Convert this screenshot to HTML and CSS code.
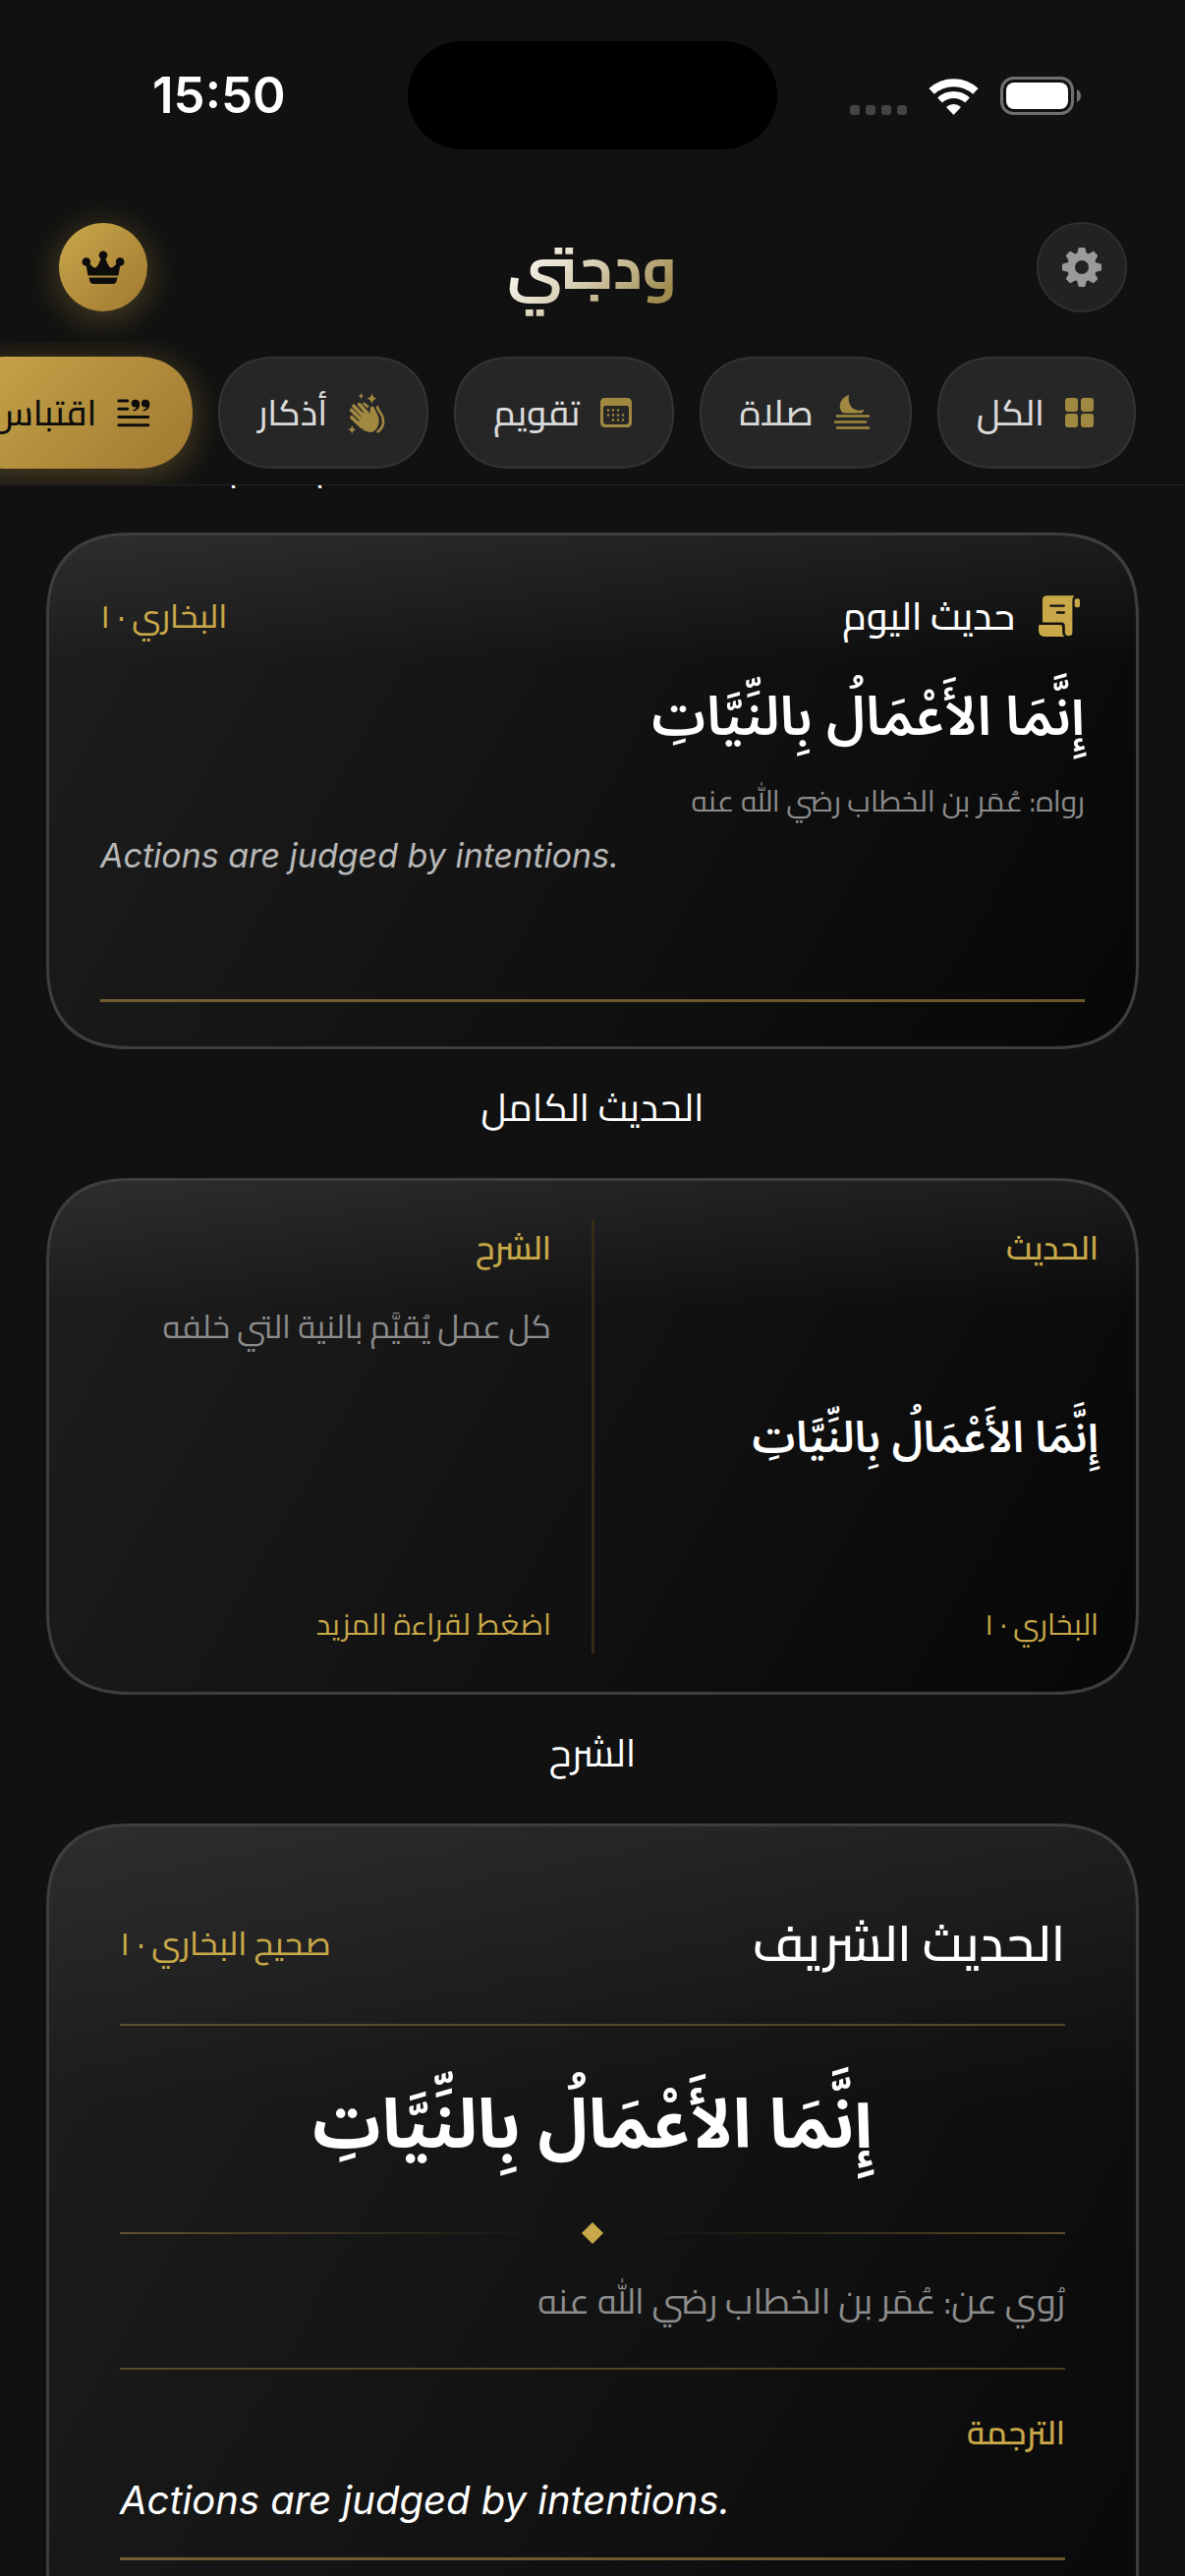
FILE: index.html
```
<!DOCTYPE html>
<html lang="ar" dir="rtl">
<head>
  <meta charset="UTF-8">
  <title>ودجتي</title>
  <meta name="viewport" content="width=device-width, initial-scale=1.0">
  <link rel="stylesheet" href="styles.css">
</head>
<body>
  <header class="top">
    <div class="status" dir="ltr">
      <span class="time">15:50</span>
      <span class="island"></span>
      <div class="signals">
        <div class="dots"><i></i><i></i><i></i><i></i></div>
        <svg width="51" height="37" viewBox="0 0 51 37" fill="none" stroke="#fff">
          <path stroke-width="8" d="M3.1 12.9A33 33 0 0 1 47.9 12.9"/>
          <path stroke-width="7" d="M11.5 22A20.5 20.5 0 0 1 39.5 22"/>
          <path fill="#fff" stroke="none" d="M25.5 37L18 29A11 11 0 0 1 33 29Z"/>
        </svg>
        <svg width="82" height="39" viewBox="0 0 82 39">
          <rect x="1.5" y="1.5" width="72" height="36" rx="12" fill="none" stroke="#707070" stroke-width="3"/>
          <rect x="6" y="6" width="63" height="27" rx="8" fill="#fff"/>
          <path d="M78 13q4 2 4 6.500t-4 6.500z" fill="#707070"/>
        </svg>
      </div>
    </div>

    <div class="bar">
      <button class="round" aria-label="الإعدادات">
        <svg width="40" height="40" viewBox="-20 -20 40 40" fill="#9a9a9a">
          <circle r="11" fill="none" stroke="#9a9a9a" stroke-width="8"/>
          <g stroke="#9a9a9a" stroke-linejoin="round" stroke-width="2">
            <path d="M-4-13L-2.500-19H2.500L4-13Z"/>
            <path d="M-4-13L-2.500-19H2.500L4-13Z" transform="rotate(45)"/>
            <path d="M-4-13L-2.500-19H2.500L4-13Z" transform="rotate(90)"/>
            <path d="M-4-13L-2.500-19H2.500L4-13Z" transform="rotate(135)"/>
            <path d="M-4-13L-2.500-19H2.500L4-13Z" transform="rotate(180)"/>
            <path d="M-4-13L-2.500-19H2.500L4-13Z" transform="rotate(225)"/>
            <path d="M-4-13L-2.500-19H2.500L4-13Z" transform="rotate(270)"/>
            <path d="M-4-13L-2.500-19H2.500L4-13Z" transform="rotate(315)"/>
          </g>
        </svg>
      </button>
      <h1>ودجتي</h1>
      <button class="round gold" aria-label="الاشتراك">
        <svg width="44" height="36" viewBox="0 0 44 36" fill="#0c0c0c">
          <circle cx="4.800" cy="12.500" r="4.300"/>
          <circle cx="22" cy="5.800" r="4.300"/>
          <circle cx="39.200" cy="12.500" r="4.300"/>
          <path d="M6.500 26.500L4.500 15 8 14Q12 19 14.500 18.500 17 17 20 8H24Q27 17 29.500 18.500 32 19 36 14L39.500 15 37.500 26.500Z"/>
          <path d="M7.500 28.500h29l-.8 3.500q-.8 3-4 3h-19.400q-3.200 0-4-3z"/>
        </svg>
      </button>
    </div>

    <nav class="tabs">
      <button class="pill">
        <svg width="29" height="30" viewBox="0 0 29 30">
          <rect width="13" height="14" rx="3"/><rect x="16" width="13" height="14" rx="3"/>
          <rect y="16" width="13" height="14" rx="3"/><rect x="16" y="16" width="13" height="14" rx="3"/>
        </svg>
        <span>الكل</span>
      </button>
      <button class="pill">
        <svg width="36" height="36" viewBox="0 0 36 36">
          <path d="M15 0C4 4 4 14 9 18.500H28Q30 17 30 15C20 18 13 11 15 0Z"/>
          <path d="M3 21.500H35M1 27.500H32M3 33.500H35" fill="none" stroke="#a08840" stroke-width="2.600" stroke-linecap="round"/>
        </svg>
        <span>صلاة</span>
      </button>
      <button class="pill">
        <svg width="32" height="30" viewBox="0 0 32 30">
          <path fill-rule="evenodd" d="M5 0H27Q32 0 32 5V25Q32 30 27 30H5Q0 30 0 25V5Q0 0 5 0ZM5 8Q3 8 3 10V24Q3 27 6 27H26Q29 27 29 24V10Q29 8 27 8Z"/>
          <path d="M8 12.500H20M8 17.500H26M13 22.500H26" fill="none" stroke="#a08840" stroke-width="2.600" stroke-linecap="round" stroke-dasharray="0 5"/>
        </svg>
        <span>تقويم</span>
      </button>
      <button class="pill">
        <svg width="39" height="43" viewBox="30 8 118 130">
          <path d="M104 11Q106 26 120 28 106 30 104 45 102 30 88 28 102 26 104 11ZM71 10Q72 19 81 20 72 21 71 31 70 21 61 20 70 19 71 10ZM43 110Q45 122 56 124 45 126 43 138 41 126 30 124 41 122 43 110Z"/>
          <path d="M65 46L98 82M48 51L86 90M41 64L78 100M42 86L72 114" fill="none" stroke="#a08840" stroke-width="11" stroke-linecap="round"/>
          <path d="M80 64L97 81Q98 70 99 57 102 49 109 53 113 58 116 66 126 82 126 98 124 126 102 132 88 133 76 124L60 108Z"/>
          <path d="M80 44L91 53M121 54Q122 60 127 67 140 84 139 103 136 121 122 130" fill="none" stroke="#a08840" stroke-width="8" stroke-linecap="round"/>
        </svg>
        <span>أذكار</span>
      </button>
      <button class="pill active">
        <svg width="34" height="29" viewBox="38 34 102 88">
          <path d="M43 40H70M43 65H70M43 90H134M43 115H134" fill="none" stroke="#0c0c0c" stroke-width="9" stroke-linecap="round"/>
          <path d="M94 36A12 12 0 0 0 94 60Q97 60 99 59 97 65 87 68 86 71 89 72 108 68 108 49 107 36 94 36ZM125 36A12 12 0 0 0 125 60Q128 60 130 59 128 65 118 68 117 71 120 72 139 68 139 49 138 36 125 36Z"/>
        </svg>
        <span>اقتباس</span>
      </button>
    </nav>
  </header>

  <main>
    <div class="pair">
      <p class="caption"></p>
      <p class="caption">اسم اليوم</p>
    </div>

    <section class="card daily">
      <div class="row">
        <h2>
          <svg width="42" height="42" viewBox="111 77 127 127" fill="#c8a849">
            <path d="M123 160V92Q123 78 137 78H221Q215 84 215 94V192Q214 202 203 202 193 201 192 191V172Q192 160 182 160Z"/>
            <path d="M111 172Q111 168 115 168H178Q184 168 184 176V190Q184 198 190 204H130Q111 203 111 184Z"/>
            <rect x="222" y="87" width="16" height="27" rx="6"/>
            <path d="M148 109H189M168 130H189" stroke="#111" stroke-width="7" stroke-linecap="round"/>
          </svg>
          حديث اليوم
        </h2>
        <span class="source">البخاري · ١</span>
      </div>
      <p class="verse">إِنَّمَا الأَعْمَالُ بِالنِّيَّاتِ</p>
      <p class="narrator">رواه: عُمَر بن الخطاب رضي الله عنه</p>
      <p class="english" dir="ltr">Actions are judged by intentions.</p>
      <hr class="thick">
    </section>
    <p class="caption">الحديث الكامل</p>

    <section class="card split">
      <div class="half">
        <h3>الحديث</h3>
        <p class="verse small">إِنَّمَا الأَعْمَالُ بِالنِّيَّاتِ</p>
        <span class="foot">البخاري · ١</span>
      </div>
      <div class="half">
        <div>
          <h3>الشرح</h3>
          <p class="explain">كل عمل يُقيَّم بالنية التي خلفه</p>
        </div>
        <a class="foot" href="#full">اضغط لقراءة المزيد</a>
      </div>
    </section>
    <p class="caption">الشرح</p>

    <section class="card full" id="full">
      <div class="row">
        <h2>الحديث الشريف</h2>
        <span class="source">صحيح البخاري · ١</span>
      </div>
      <hr>
      <p class="verse large">إِنَّمَا الأَعْمَالُ بِالنِّيَّاتِ</p>
      <div class="ornament">
        <span class="fade"></span>
        <svg width="22" height="22" viewBox="0 0 22 22" fill="#c8a849"><path d="M11 0L22 11 11 22 0 11Z"/></svg>
        <span class="fade left"></span>
      </div>
      <p class="narrator">رُوي عن: عُمَر بن الخطاب رضي الله عنه</p>
      <hr>
      <h3>الترجمة</h3>
      <p class="english" dir="ltr">Actions are judged by intentions.</p>
      <hr class="thick">
    </section>
  </main>
</body>
</html>
```
FILE: styles.css
```
* {
  box-sizing: border-box;
}

html {
  overflow: hidden;
}

body {
  margin: 0;
  background: #111111;
  color: #ffffff;
  font-family: Cairo, "Noto Sans Arabic", "Noto Sans", sans-serif;
}

h1, h2, h3, p {
  margin: 0;
}

button {
  border: 0;
  font-family: inherit;
  cursor: pointer;
}

svg {
  flex-shrink: 0;
}

/* header */
.top {
  position: relative;
  z-index: 1;
  background: #111111;
  border-bottom: 1px solid #222222;
}

.status {
  display: grid;
  grid-template-columns: 1fr auto 1fr;
  align-items: center;
  height: 194px;
  padding: 0 106px;
}

.time {
  padding-left: 49px;
  font: 600 51px/60px Inter, sans-serif;
}

.island {
  width: 376px;
  height: 110px;
  border-radius: 55px;
  background: #000000;
}

.signals {
  display: flex;
  justify-content: flex-end;
  align-items: flex-end;
  gap: 22px;
}

.dots {
  display: flex;
  gap: 6px;
}

.dots i {
  width: 10px;
  height: 10px;
  border-radius: 3px;
  background: #444444;
}

.bar {
  display: flex;
  justify-content: space-between;
  align-items: center;
  padding: 22px 59px 19px 60px;
}

.bar h1 {
  font-size: 60px;
  font-weight: 700;
  line-height: 112px;
  background: linear-gradient(135deg, #ffffff 15%, #d8cfb4 50%, #a08c50 85%);
  -webkit-background-clip: text;
  background-clip: text;
  color: transparent;
}

.round {
  display: flex;
  justify-content: center;
  align-items: center;
  width: 92px;
  height: 92px;
  padding: 0;
  border: 2px solid #2e2e2e;
  border-radius: 50%;
  background: #222222;
}

.round.gold {
  width: 90px;
  height: 90px;
  border: 0;
  background: linear-gradient(135deg, #c8a84b, #a07830);
  box-shadow: 0 6px 36px rgba(200, 168, 73, 0.35);
}

.tabs {
  display: flex;
  gap: 26px;
  padding: 16px 50px;
  overflow: hidden;
}

.pill {
  display: flex;
  flex-shrink: 0;
  align-items: center;
  gap: 21px;
  height: 114px;
  padding: 0 41px 0 38px;
  border: 2px solid #333333;
  border-radius: 57px;
  corner-shape: superellipse(1.15);
  background: #262626;
  color: #dadada;
  fill: #a08840;
  font-size: 36px;
  font-weight: 500;
}

.pill.active {
  border-color: transparent;
  background: linear-gradient(135deg, #c8a84b, #a07830) border-box;
  box-shadow: 0 6px 36px rgba(200, 168, 73, 0.35);
  color: #0c0c0c;
  fill: #0c0c0c;
}

main {
  margin-top: -54px;
  padding: 0 47px;
}

.pair {
  display: grid;
  grid-template-columns: 1fr 1fr;
  gap: 52px;
}

.pair .caption {
  padding-top: 0;
}

.caption {
  padding: 29px 0 42px;
  font-size: 39px;
  line-height: 60px;
  text-align: center;
}

.card {
  display: flex;
  flex-direction: column;
  border: 3px solid #3e3e3e;
  border-radius: 88px;
  corner-shape: superellipse(1.3);
  background:
    linear-gradient(to bottom, rgba(255, 255, 255, 0.07), transparent 25%),
    linear-gradient(120deg, #1e1e1e, #121212 50%, #070707);
}

.row {
  display: flex;
  justify-content: space-between;
  align-items: center;
}

.source,
h3 {
  color: #c8a849;
  font-size: 33px;
  font-weight: 500;
  line-height: 58px;
}

h3 {
  font-weight: 600;
}

.verse {
  font-family: "Noto Sans Arabic", "Noto Sans", sans-serif;
  font-size: 55px;
  font-weight: 600;
  line-height: 118px;
}

.narrator {
  color: #8c8c8c;
  font-size: 30px;
  line-height: 50px;
}

.english {
  color: #b8b8b8;
  font: italic 34px/50px Inter, sans-serif;
}

hr {
  width: 100%;
  height: 2px;
  margin: 0;
  border: 0;
  background: rgba(200, 168, 73, 0.35);
}

hr.thick {
  height: 3px;
  background: rgba(200, 168, 73, 0.5);
}

/* hadith of the day */
.daily {
  min-height: 526px;
  padding: 52px 52px 45px;
}

.daily h2 {
  display: flex;
  align-items: center;
  gap: 24px;
  padding-right: 5px;
  font-size: 39px;
  font-weight: 500;
  line-height: 60px;
}

.daily .verse {
  margin-top: 15px;
}

.daily .english {
  margin-top: 6px;
}

.daily .thick {
  margin-top: auto;
}

/* hadith and its explanation */
.split {
  display: grid;
  grid-template-columns: 1fr 1fr;
  min-height: 526px;
  padding: 39px 38px;
}

.half {
  display: flex;
  flex-direction: column;
  justify-content: space-between;
  padding-bottom: 5px;
}

.half + .half {
  margin-right: -2px;
  padding-right: 41px;
  border-right: 3px solid #342c18;
}

.verse.small {
  font-size: 44px;
  line-height: 86px;
}

.explain {
  margin-top: 22px;
  color: #8c8c8c;
  font-size: 33px;
  line-height: 58px;
}

.foot {
  color: #c8a849;
  font-size: 30px;
  line-height: 50px;
  text-decoration: none;
}

/* full hadith */
.full {
  min-height: 1150px;
  padding: 74px 72px;
}

.full h2 {
  font-size: 51px;
  font-weight: 600;
  line-height: 90px;
}

.full .row {
  margin-bottom: 37px;
}

.verse.large {
  margin: 37px 0 33px;
  font-size: 69px;
  font-weight: 700;
  line-height: 130px;
  text-align: center;
}

.ornament {
  display: flex;
  align-items: center;
  gap: 40px;
}

.fade {
  flex: 1;
  height: 2px;
  background: linear-gradient(to left, rgba(200, 168, 73, 0.4), transparent);
}

.fade.left {
  background: linear-gradient(to right, rgba(200, 168, 73, 0.4), transparent);
}

.full .narrator {
  margin: 29px 0 39px;
  font-size: 36px;
  line-height: 58px;
}

.full h3 {
  margin-top: 35px;
}

.full .english {
  margin: 10px 0 28px;
  color: #ffffff;
  font-size: 40px;
  line-height: 60px;
}
```
